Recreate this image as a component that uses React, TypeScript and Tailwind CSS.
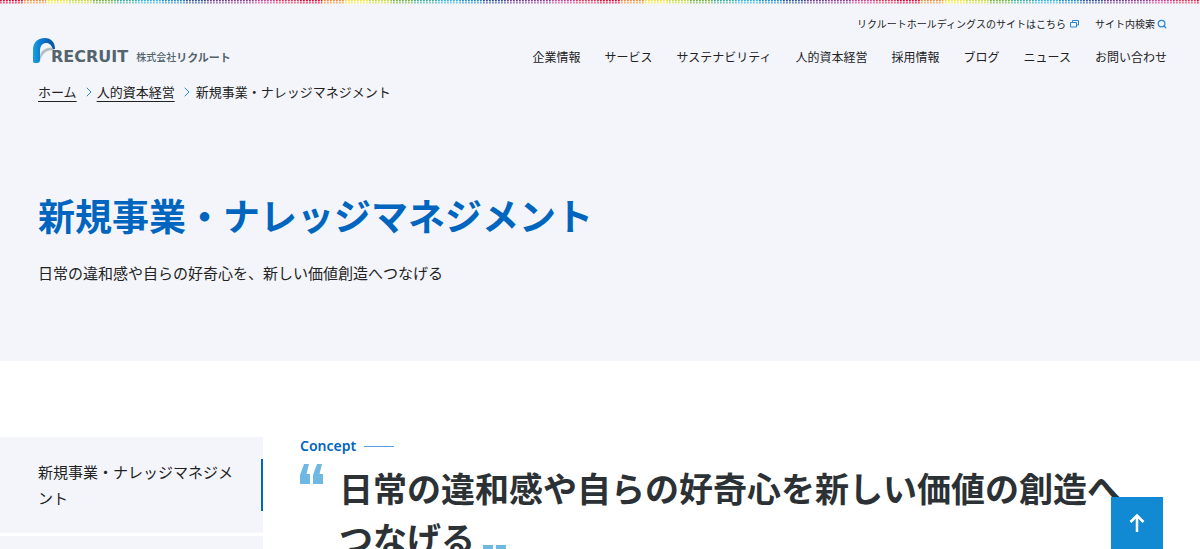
import { ChevronRight, Search } from 'lucide-react'

const navItems = ['企業情報', 'サービス', 'サステナビリティ', '人的資本経営', '採用情報', 'ブログ', 'ニュース', 'お問い合わせ']

const stripColors = ['#e60033', '#f08a3c', '#f2e33c', '#c3d83c', '#6fb044', '#3aa99a', '#2fb0e6', '#1f86cc', '#2b4c9c', '#6a3a90', '#8a3a92', '#cf3f92', '#e0305a']

function ColorStrip() {
  return (
    <svg className="block h-1 w-full" aria-hidden="true">
      <defs>
        <pattern id="dots" width="299" height="4" patternUnits="userSpaceOnUse">
          {stripColors.map((color, i) => (
            <rect key={i} x={i * 23} width="23" height="4" fill={color} />
          ))}
        </pattern>
        <pattern id="mesh" width="3" height="4" patternUnits="userSpaceOnUse">
          <rect x="2" width="1" height="4" fill="#fff" fillOpacity=".9" />
          <rect x="1" width="1" height="4" fill="#fff" fillOpacity=".2" />
          <rect y="1" width="3" height="1" fill="#fff" fillOpacity=".6" />
          <rect y="2" width="3" height="1" fill="#fff" fillOpacity=".35" />
          <rect y="3" width="3" height="1" fill="#fff" fillOpacity=".6" />
        </pattern>
      </defs>
      <rect width="100%" height="4" fill="url(#dots)" />
      <rect width="100%" height="4" fill="url(#mesh)" />
    </svg>
  )
}

function Logo() {
  return (
    <a href="#" className="flex items-end text-[#53646c]" aria-label="株式会社リクルート">
      <svg width="22" height="26" viewBox="0 0 22 26" className="-mr-1 shrink-0" aria-hidden="true">
        <defs>
          <linearGradient id="mark" x1="0" y1="0" x2="1" y2="0">
            <stop offset="0" stopColor="#1c9fe2" />
            <stop offset=".4" stopColor="#0877cc" />
            <stop offset="1" stopColor="#0a4fa0" />
          </linearGradient>
        </defs>
        <path d="M7 23V18C8 12 13 9 21 9.500V12C14 12 9 15 7 23Z" fill="#b4bdc2" />
        <path d="M0 23V12C0 4 5 0 12 0C18 0 22 4 22 11H20C18 6.500 16 5 13 5C9.500 5 7 8 7 13V21C7 24 6 25 4 25H2C.7 25 0 24.500 0 23Z" fill="url(#mark)" />
      </svg>
      <span className="font-['DejaVu_Sans',sans-serif] text-base leading-[14px] font-bold">RECRUIT</span>
      <span className="ml-2 text-[10px] leading-[14px] font-medium">株式会社</span>
      <span className="text-[11px] leading-[14px] font-bold">リクルート</span>
    </a>
  )
}

export default function App() {
  return (
    <div className="h-screen overflow-hidden bg-white font-['Noto_Sans_CJK_JP',sans-serif] text-[#222]">
      <div className="bg-[#f3f5fb] pb-[75px]">
        <ColorStrip />
        <header className="flex justify-between px-[33px]">
          <div className="pt-[34px]">
            <Logo />
          </div>
          <div className="flex flex-col items-end pt-3">
            <div className="flex gap-4 text-[10px] leading-4">
              <a href="#" className="flex items-center gap-1">
                リクルートホールディングスのサイトはこちら
                <svg width="9" height="8" viewBox="0 0 9 8" fill="none" stroke="#2a86d8" aria-hidden="true">
                  <path d="M2.5 2V.5H8.5V5H7M.5 2.5H6.5V7H.5Z" />
                </svg>
              </a>
              <a href="#" className="flex items-center gap-0.5">
                サイト内検索
                <Search className="size-[10px] text-[#2a86d8]" strokeWidth={3} />
              </a>
            </div>
            <nav className="mt-[15px] flex gap-6 text-xs leading-5">
              {navItems.map((item) => (
                <a key={item} href="#">{item}</a>
              ))}
            </nav>
          </div>
        </header>

        <nav aria-label="パンくず" className="mt-[15px] flex items-center px-[38px] text-[13px] leading-5">
          <a href="#" className="underline underline-offset-4">ホーム</a>
          <ChevronRight className="ml-1 size-4 text-[#2a86d8]" strokeWidth={1.5} />
          <a href="#" className="underline underline-offset-4">人的資本経営</a>
          <ChevronRight className="mr-px ml-1 size-4 text-[#2a86d8]" strokeWidth={1.5} />
          <span>新規事業・ナレッジマネジメント</span>
        </nav>

        <div className="px-[38px] pt-[85px]">
          <h1 className="text-[37px] leading-[56px] font-bold text-[#0065bf]">新規事業・ナレッジマネジメント</h1>
          <p className="mt-[17px] text-[15px] leading-[26px]">日常の違和感や自らの好奇心を、新しい価値創造へつなげる</p>
        </div>
      </div>

      <div className="flex pt-[76px]">
        <aside className="flex w-[263px] shrink-0 flex-col gap-[3px]">
          <div className="bg-[#f3f5fb] py-[22px]">
            <a href="#" className="block border-r-2 border-[#0068c4] pr-7 pl-[38px] text-[15px] leading-[26px]">
              新規事業・ナレッジマネジメント
            </a>
          </div>
          <div className="h-24 bg-[#f3f5fb]" />
        </aside>

        <main className="min-w-0 flex-1 pr-[75px] pl-[37px]">
          <p className="flex items-center gap-2 font-['Noto_Sans',sans-serif] text-sm leading-[18px] font-semibold text-[#0065bf]">
            Concept
            <span className="h-px w-[30px] bg-[#5a9fdc]" />
          </p>
          <div className="flex gap-4 pt-2">
            <svg width="23" height="21" viewBox="0 0 23 21" fill="#70b8e4" className="mt-px shrink-0" aria-hidden="true">
              <path d="M4 0H9L6.500 10H10V20H0V11ZM17 0H22L19.500 10H23V20H13V11Z" />
            </svg>
            <h2 className="text-[34px] leading-[50px] font-bold text-[#2b3134]">
              日常の違和感や自らの好奇心を新しい価値の創造へつなげる
              <svg width="23" height="21" viewBox="0 0 23 21" fill="#70b8e4" className="-mb-3.5 ml-2 inline-block align-baseline" aria-hidden="true">
                <path d="M0 0H10V9L6 20H1L3.500 10H0ZM13 0H23V9L19 20H14L16.500 10H13Z" />
              </svg>
            </h2>
          </div>
        </main>
      </div>

      <button type="button" aria-label="ページの先頭へ" className="fixed right-[37px] bottom-0 flex size-[52px] items-center justify-center bg-[#128ad3] text-white">
        <svg width="16" height="20" viewBox="0 0 16 20" fill="none" stroke="currentColor" strokeWidth="2.500" aria-hidden="true">
          <path d="M8 19V2M1.500 9L8 2.500L14.500 9" />
        </svg>
      </button>
    </div>
  )
}
